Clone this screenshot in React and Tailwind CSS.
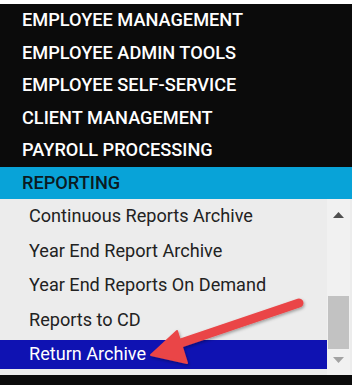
import React from "react";

const top = [
  "EMPLOYEE MANAGEMENT",
  "EMPLOYEE ADMIN TOOLS",
  "EMPLOYEE SELF-SERVICE",
  "CLIENT MANAGEMENT",
  "PAYROLL PROCESSING",
];
const subs = [
  "Continuous Reports Archive",
  "Year End Report Archive",
  "Year End Reports On Demand",
  "Reports to CD",
];

export default function App() {
  return (
    <div
      className="relative w-[355px] h-[385px] overflow-hidden bg-white pt-[4px]"
      style={{ fontFamily: "Roboto, 'Liberation Sans', sans-serif" }}
    >
      <div className="w-[352px] h-[381px] bg-[#0b0b0b] flex flex-col">
        {top.map((t) => (
          <div
            key={t}
            className="h-[32.5px] flex items-center pl-[22px] text-[18.2px] font-medium text-white leading-none"
          >
            {t}
          </div>
        ))}
        <div className="h-[32.5px] flex items-center pl-[22px] text-[18.2px] font-medium text-[#0b1a22] bg-[#08a3d8] leading-none">
          REPORTING
        </div>
        <div className="h-[176px] bg-[#ececec] flex">
          <div className="flex-1 flex flex-col">
            {subs.map((s) => (
              <div
                key={s}
                className="h-[34.5px] flex items-center pl-[29px] text-[18.1px] text-[#222] leading-none"
              >
                {s}
              </div>
            ))}
            <div className="h-[29px] mt-[3px] flex items-center pl-[29px] text-[18.1px] text-white bg-[#0f12b2] leading-none">
              Return Archive
            </div>
          </div>
          <div className="w-[23px] mr-[2px] bg-[#f1f1f1] flex flex-col items-center pb-[4px]">
            <div className="h-[19px] flex items-end justify-center">
              <svg width="11" height="6" viewBox="0 0 11 6">
                <polygon points="5.5,0 11,6 0,6" fill="#4f4f4f" />
              </svg>
            </div>
            <div className="flex-1" />
            <div className="w-[21px] h-[53px] bg-[#c2c2c2]" />
            <div className="h-[22px] flex items-center justify-center">
              <svg width="11" height="6" viewBox="0 0 11 6">
                <polygon points="0,0 11,0 5.5,6" fill="#a3a3a3" />
              </svg>
            </div>
          </div>
        </div>
      </div>
      <svg
        className="absolute left-0 top-0 pointer-events-none"
        width="355"
        height="385"
        viewBox="0 0 355 385"
      >
        <defs>
          <filter id="sh" x="-20%" y="-20%" width="140%" height="140%">
            <feDropShadow dx="1" dy="1.5" stdDeviation="1.5" floodColor="#000" floodOpacity="0.35" />
          </filter>
        </defs>
        <g filter="url(#sh)" fill="#ea4546" stroke="#ea4546">
          <line x1="299" y1="303" x2="175" y2="345" strokeWidth="9" strokeLinecap="round" />
          <polygon points="151,355 177,331 187,363" strokeWidth="2" strokeLinejoin="round" />
        </g>
      </svg>
    </div>
  );
}
